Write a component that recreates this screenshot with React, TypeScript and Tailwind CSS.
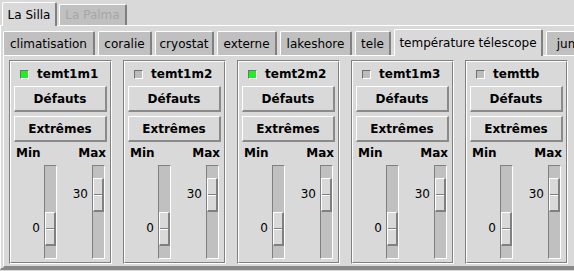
import React from "react";

const topTabs = [
  { label: "La Silla", active: true, w: "w-[55px]" },
  { label: "La Palma", active: false, w: "w-[68px]" },
];

const innerTabs = [
  { label: "climatisation", w: "w-[92px]" },
  { label: "coralie", w: "w-[54px]" },
  { label: "cryostat", w: "w-[59px]" },
  { label: "externe", w: "w-[60px]" },
  { label: "lakeshore", w: "w-[72px]" },
  { label: "tele", w: "w-[36px]" },
  { label: "température télescope", w: "w-[149px]", active: true },
  { label: "jumbo", w: "w-[60px]" },
];

const sensors = [
  { name: "temt1m1", on: true },
  { name: "temt1m2", on: false },
  { name: "temt2m2", on: true },
  { name: "temt1m3", on: false },
  { name: "temttb", on: false },
];

function Thumb() {
  return (
    <div className="flex h-[34px] w-[11px] flex-col justify-center border-t border-l border-white border-r-2 border-b-2 border-r-[#808080] border-b-[#808080] bg-[#d9d9d9]">
      <div className="h-px w-full bg-[#808080]" />
      <div className="h-px w-full bg-white" />
    </div>
  );
}

function Slider({ value, kind }: { value: string; kind: "min" | "max" }) {
  return (
    <div className="flex">
      <div
        className={
          (kind === "min" ? "w-[30px] pt-[56px] " : "w-[35px] pt-[22px] ") +
          "pr-[4px] text-right text-[12px] leading-[14px] text-black"
        }
      >
        {value}
      </div>
      <div className="flex h-[94px] w-[13px] flex-col border-t border-l border-t-[#808080] border-l-[#808080] border-b border-r border-b-white border-r-white bg-[#c0c0c0]">
        <div className={kind === "min" ? "mt-[46px]" : "mt-[12px]"}>
          <Thumb />
        </div>
      </div>
    </div>
  );
}

function RaisedButton({ children }: { children: React.ReactNode }) {
  return (
    <div className="flex h-[26px] items-center justify-center border-t border-l border-white border-r-2 border-b-2 border-r-[#8a8a8a] border-b-[#8a8a8a] bg-[#d9d9d9] text-[12px] font-bold text-black">
      {children}
    </div>
  );
}

function SensorPanel({ name, on }: { name: string; on: boolean }) {
  return (
    <div className="h-[204px] w-[103px] shrink-0 border border-t-[#808080] border-l-[#808080] border-b-white border-r-white">
      <div className="flex h-full flex-col border border-t-white border-l-white border-b-[#808080] border-r-[#808080] px-[3px]">
        <div className="flex h-[24px] items-center pl-[6px]">
          <div
            className={
              "h-[9px] w-[9px] border border-t-[#707070] border-l-[#707070] border-b-white border-r-white " +
              (on ? "bg-[#22ee22]" : "bg-[#bcbcbc]")
            }
          />
          <span className="ml-[8px] text-[12px] font-bold text-black">{name}</span>
        </div>
        <RaisedButton>Défauts</RaisedButton>
        <div className="mt-[4px]">
          <RaisedButton>Extrêmes</RaisedButton>
        </div>
        <div className="mt-[2px] flex h-[18px] items-center justify-between pl-[2px] pr-px text-[12px] font-bold text-black">
          <span>Min</span>
          <span>Max</span>
        </div>
        <div className="mt-[3px] flex">
          <Slider value="0" kind="min" />
          <Slider value="30" kind="max" />
        </div>
      </div>
    </div>
  );
}

export default function App() {
  return (
    <div
      className="h-[271px] w-[574px] overflow-hidden bg-[#d9d9d9] text-black"
      style={{ fontFamily: '"DejaVu Sans", "Liberation Sans", sans-serif' }}
    >
      <div className="w-[640px]">
        <div className="flex h-[25px] items-end gap-[2px] pl-[2px]">
          {topTabs.map((tab) =>
            tab.active ? (
              <div
                key={tab.label}
                className={
                  tab.w +
                  " relative z-10 -mb-px flex h-[24px] items-center justify-center rounded-t-[2px] border-t border-l border-white border-r-2 border-r-[#808080] bg-[#d9d9d9] text-[12px]"
                }
              >
                {tab.label}
              </div>
            ) : (
              <div
                key={tab.label}
                className={
                  tab.w +
                  " flex h-[21px] items-center justify-center rounded-t-[2px] border-t border-l border-white border-r-2 border-r-[#808080] bg-[#c0c0c0] text-[12px] text-[#a6a6a6]"
                }
              >
                {tab.label}
              </div>
            )
          )}
        </div>
        <div className="border-t border-l border-white border-b-2 border-b-[#888888] pl-[2px]">
          <div className="flex h-[29px] items-end gap-[3px]">
            {innerTabs.map((tab) =>
              tab.active ? (
                <div
                  key={tab.label}
                  className={
                    tab.w +
                    " relative z-10 -mb-px flex h-[27px] shrink-0 items-center justify-center rounded-t-[2px] border-t border-l border-white border-r-2 border-r-[#808080] bg-[#d9d9d9] text-[12px]"
                  }
                >
                  {tab.label}
                </div>
              ) : (
                <div
                  key={tab.label}
                  className={
                    tab.w +
                    " flex h-[24px] shrink-0 items-center justify-center rounded-t-[2px] border-t border-l border-white border-r-2 border-r-[#808080] bg-[#c0c0c0] text-[12px]"
                  }
                >
                  {tab.label}
                </div>
              )
            )}
          </div>
          <div className="flex gap-[11px] border-t border-l border-white border-b-2 border-b-[#888888] pt-[4px] pb-[2px] pl-[5px]">
            {sensors.map((s) => (
              <SensorPanel key={s.name} name={s.name} on={s.on} />
            ))}
          </div>
        </div>
      </div>
    </div>
  );
}
